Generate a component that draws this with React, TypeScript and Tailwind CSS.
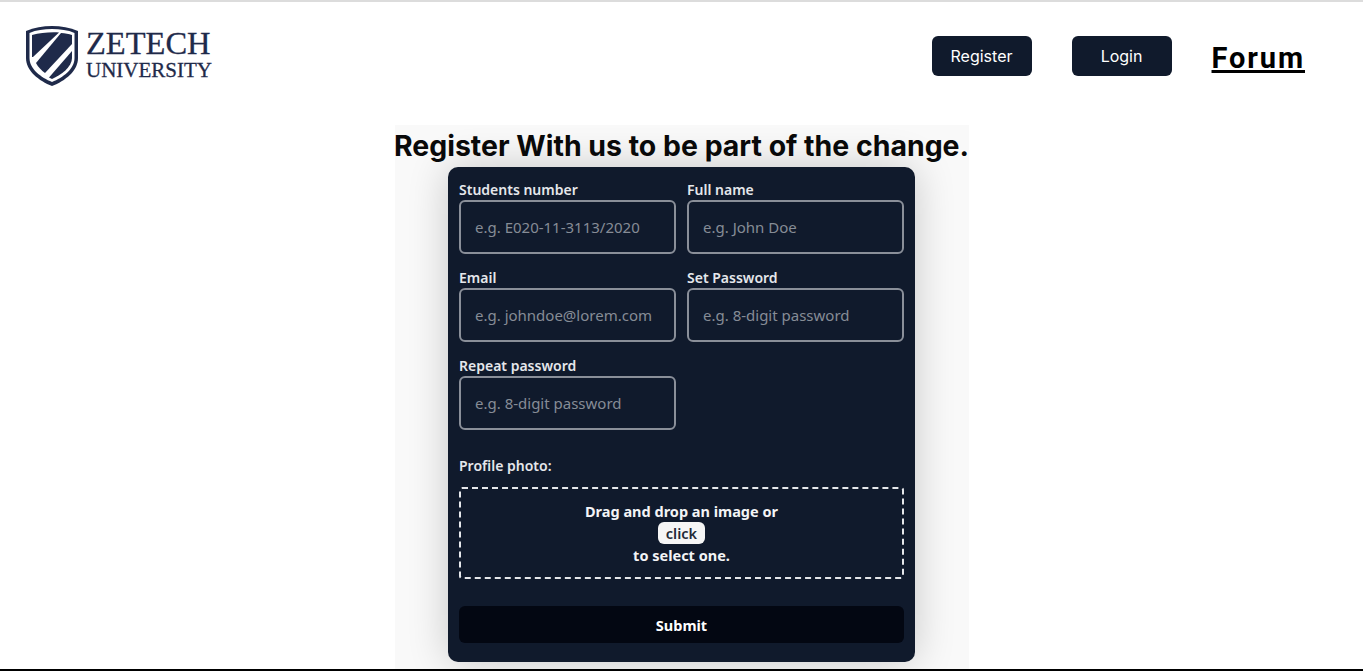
import type React from "react"

const formFont = "font-['Noto_Sans',sans-serif]"

const Field: React.FC<{ label: string; placeholder: string }> = ({ label, placeholder }) => (
  <label className="block w-[217px]">
    <span className="block h-[22px] pt-[3px] text-[14px] leading-[18px] font-semibold text-[#e5e7eb]">{label}</span>
    <input
      readOnly
      placeholder={placeholder}
      className="block h-[54px] w-full rounded-md border-2 border-[#8a8f99] bg-[#101a2c] px-[14px] text-[15px] text-white outline-none placeholder:text-[#868c96]"
    />
  </label>
)

const Logo: React.FC = () => (
  <div className="flex items-start gap-[7px]">
    <svg width="54" height="62" viewBox="0 0 54 62" aria-hidden="true">
      <path d="M27 1 C36 1 45 2.500 53 6 V33 C53 46 40 56 27 61 C14 56 1 46 1 33 V6 C9 2.500 18 1 27 1 Z" fill="#1f2a4a" />
      <path d="M27 4 C35 4 43 5 49.500 8 V33 C49.500 44 38 52.500 27 57 C16 52.500 4.500 44 4.500 33 V8 C11 5 19 4 27 4 Z" fill="#ffffff" />
      <path d="M7 10 C15 8 24 7 34 7.500 L8 32 H7 Z" fill="#1f2a4a" />
      <path d="M36 8 C40 8.300 44 9 47 10 V19 L20 48 C16.500 45.500 13 42 11 38 Z" fill="#1f2a4a" />
      <path d="M47 26 V33 C47 42 36 50 27 54 C26 53.500 25 53 24 52.500 Z" fill="#1f2a4a" />
    </svg>
    <div className="pt-[3px] font-['Liberation_Serif',serif] text-[#1f2a4a] [-webkit-text-stroke:0.300px_#1f2a4a]">
      <div className="text-[32.500px] leading-[30px]">ZETECH</div>
      <div className="text-[21px] leading-[24px]">UNIVERSITY</div>
    </div>
  </div>
)

export default function App() {
  return (
    <div className="flex h-[671px] flex-col overflow-hidden border-t-2 border-[#dcdcdc] bg-white font-['Inter',sans-serif]">
      <header className="flex h-[123px] shrink-0 items-start justify-between pt-[23px] pr-[58px] pl-[25px]">
        <Logo />
        <nav className="flex items-center gap-10 pt-[11px]">
          <button className="h-10 w-[100px] rounded-md bg-[#101a2c] text-[16px] text-white">Register</button>
          <button className="h-10 w-[100px] rounded-md bg-[#101a2c] text-[16px] text-white">Login</button>
          <a className="h-10 font-['Roboto',sans-serif] text-[29px] leading-[45px] font-bold tracking-[1.900px] text-black underline decoration-[3px]">Forum</a>
        </nav>
      </header>

      <main className="flex min-h-0 flex-1 justify-center">
        <section className="flex w-[574px] flex-col items-center bg-[#f9f9f9]">
          <h1 className="h-[42px] text-[28.450px] leading-[42px] font-bold whitespace-nowrap text-[#0a0a0a]">
            Register With us to be part of the change.
          </h1>
          <form className={`h-[495px] w-[467px] shrink-0 rounded-[10px] bg-[#101a2c] px-[11px] pt-[11px] shadow-[0_0_40px_rgba(0,0,0,0.2)] ${formFont}`}>
            <div className="grid grid-cols-[217px_217px] gap-x-[11px] gap-y-[12px]">
              <Field label="Students number" placeholder="e.g. E020-11-3113/2020" />
              <Field label="Full name" placeholder="e.g. John Doe" />
              <Field label="Email" placeholder="e.g. johndoe@lorem.com" />
              <Field label="Set Password" placeholder="e.g. 8-digit password" />
              <Field label="Repeat password" placeholder="e.g. 8-digit password" />
            </div>
            <p className="mt-[26px] text-[14px] leading-[20px] font-semibold text-[#e5e7eb]">Profile photo:</p>
            <div className="mt-[11px] flex h-[92px] flex-col items-center justify-center rounded-[3px] border-2 border-dashed border-[#e5e7eb] text-[14.500px] leading-[22px] font-bold text-[#f3f4f6]">
              <span>Drag and drop an image or</span>
              <span className="rounded-md bg-[#f5f5f5] px-[8px] leading-[22px] font-semibold text-[#1f2937]">click</span>
              <span>to select one.</span>
            </div>
            <button type="button" className="mt-[27px] h-[37px] w-full rounded-md bg-[#030712] pt-[2px] text-[14.500px] font-bold text-white">
              Submit
            </button>
          </form>
        </section>
      </main>

      <footer className="h-[2px] shrink-0 bg-black" />
    </div>
  )
}
